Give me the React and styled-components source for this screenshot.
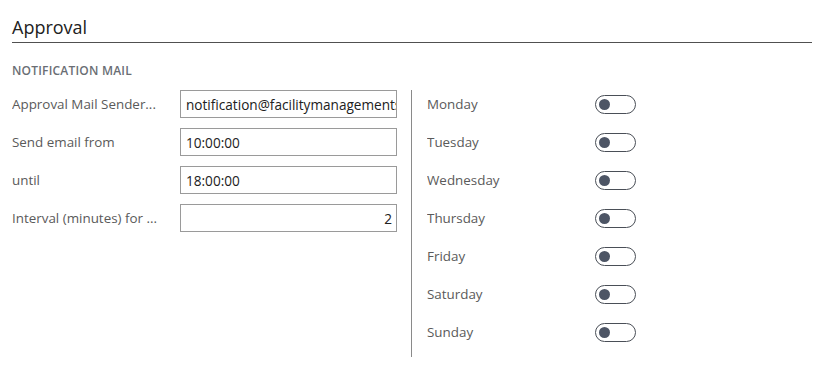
import React from "react";
import styled, { createGlobalStyle } from "styled-components";

const Global = createGlobalStyle`
  html, body { margin: 0; padding: 0; background: #ffffff; }
  body { font-family: "Open Sans", "Noto Sans", sans-serif; }
  * { box-sizing: border-box; }
`;

const Page = styled.div`
  padding: 15px 16px 0 12px;
  width: 828px;
`;

const Header = styled.div`
  border-bottom: 1px solid #505050;
  padding-bottom: 3px;
`;

const Title = styled.h1`
  margin: 0;
  font-size: 18px;
  line-height: 24px;
  font-weight: 400;
  color: #212121;
`;

const SectionTitle = styled.h2`
  margin: 20px 0 11px 0;
  font-size: 12px;
  line-height: 16px;
  font-weight: 600;
  letter-spacing: 0.2px;
  color: #6a6e74;
  text-transform: uppercase;
`;

const Columns = styled.div`
  display: flex;
`;

const LeftCol = styled.div`
  width: 400px;
  border-right: 1px solid #8a8a8a;
  display: flex;
  flex-direction: column;
  gap: 10px;
  padding-bottom: 11px;
`;

const RightCol = styled.div`
  padding-left: 15px;
  display: flex;
  flex-direction: column;
  gap: 10px;
  padding-bottom: 11px;
`;

const Row = styled.div`
  display: flex;
  align-items: center;
  height: 28px;
`;

const Label = styled.span`
  width: ${(p) => p.$w}px;
  flex: none;
  font-size: 13.4px;
  color: #5a5a5a;
  white-space: nowrap;
  overflow: hidden;
`;

const Input = styled.div`
  width: 217px;
  height: 28px;
  border: 1px solid #9a9a9a;
  padding: 0 4px 0 5px;
  display: flex;
  align-items: center;
  justify-content: ${(p) => (p.$right ? "flex-end" : "flex-start")};
  font-size: 13.6px;
  color: #212121;
  white-space: nowrap;
  overflow: hidden;
`;

const Toggle = styled.div`
  width: 41px;
  height: 19px;
  border: 1px solid #4a4f57;
  border-radius: 10px;
  display: flex;
  align-items: center;
  padding-left: 3px;
`;

const Knob = styled.div`
  width: 11px;
  height: 11px;
  border-radius: 50%;
  background: #4d5565;
`;

const fields = [
  { label: "Approval Mail Sender...", value: "notification@facilitymanagements" },
  { label: "Send email from", value: "10:00:00" },
  { label: "until", value: "18:00:00" },
  { label: "Interval (minutes) for ...", value: "2", right: true },
];

const days = ["Monday", "Tuesday", "Wednesday", "Thursday", "Friday", "Saturday", "Sunday"];

export default function App() {
  return (
    <Page>
      <Global />
      <Header>
        <Title>Approval</Title>
      </Header>
      <SectionTitle>Notification Mail</SectionTitle>
      <Columns>
        <LeftCol>
          {fields.map((f) => (
            <Row key={f.label}>
              <Label $w={168}>{f.label}</Label>
              <Input $right={f.right}>{f.value}</Input>
            </Row>
          ))}
        </LeftCol>
        <RightCol>
          {days.map((d) => (
            <Row key={d}>
              <Label $w={168}>{d}</Label>
              <Toggle>
                <Knob />
              </Toggle>
            </Row>
          ))}
        </RightCol>
      </Columns>
    </Page>
  );
}
